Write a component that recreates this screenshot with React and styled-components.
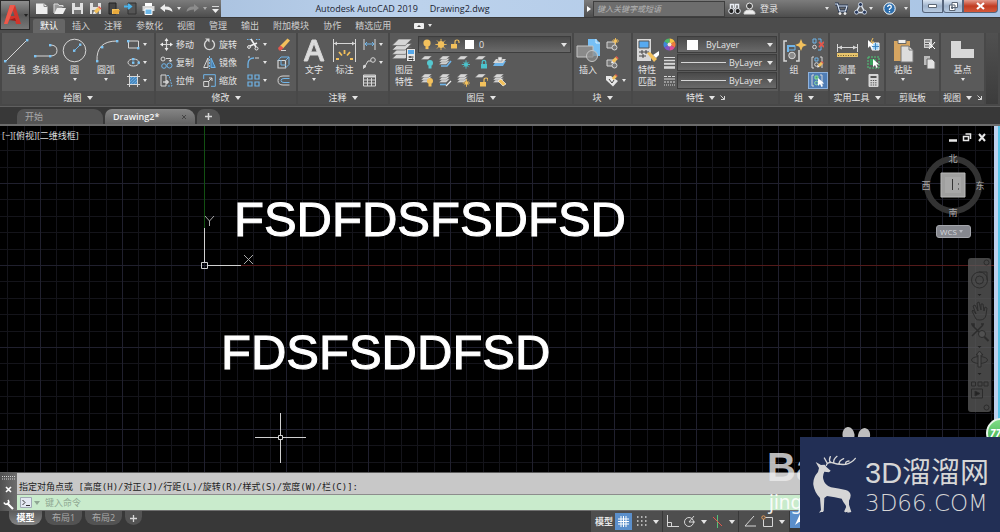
/**
 * =CAD workspace
 ************************************************************/

import React from "react";
import styled, { createGlobalStyle } from "styled-components";

/**
 * =Theme
 ******************************/

const COL = {
	light: "#d6d6d6",
	blue: "#6fb4e8",
	yellow: "#f3c15c",
	text: "#e4e4e4",
	panel: "#5a5a5a",
	panelDark: "#4c4c4c",
	dark: "#383838",
	navy: "#222f55"
};

const FONT = `"Open Sans", "Noto Sans CJK SC", sans-serif`;

/**
 * =Styles
 ******************************/

const GlobalStyle = createGlobalStyle`
	* {
		box-sizing: border-box;
	}

	body {
		margin: 0;
		background: ${COL.dark};
		color: ${COL.text};
		font-family: ${FONT};
		font-size: 9px;
		line-height: 12px;
	}

	button, input, select {
		border: none;
		background: none;
		color: inherit;
		font: inherit;
		margin: 0;
		padding: 0;
		min-width: 0;
	}

	svg {
		display: block;
		flex: none;
	}
`;

const Page = styled.div`
	position: relative;
	display: flex;
	flex-direction: column;
	min-height: 100vh;
	overflow: hidden;
`;

const Caret = styled.span`
	flex: none;
	width: 0;
	height: 0;
	border: solid transparent;
	border-width: ${p => (p.$big ? "4px 3px 0" : "3px 2px 0")};
	border-top-color: ${p => p.$color || COL.text};
`;

// Header

const Header = styled.header`
	display: grid;
	grid-template-columns: 30px 1fr;
	grid-template-rows: 18px 15px;
	background: ${COL.panelDark};
`;

const AppButton = styled.button`
	grid-row: 1 / 3;
	height: 30px;
	display: flex;
	align-items: center;
	gap: 2px;
	padding-left: 3px;
	border: 1px solid #2a2a2a;
	background: linear-gradient(#8e8e8e, #5a5a5a 50%, #777);
`;

const TitleBar = styled.div`
	display: flex;
	background: linear-gradient(90deg, #9cb6d6, #bcd2ec 40%, #a9c4e4);
	border-bottom: 1px solid #3a3a3a;
`;

const QuickAccess = styled.div`
	flex: none;
	display: flex;
	align-items: center;
	width: 191px;
	padding-left: 3px;
	background: linear-gradient(#7c7c7c, #4d4d4d);
`;

const QuickButton = styled.button`
	display: flex;
	justify-content: center;
	align-items: center;
	width: ${p => p.$w || 18}px;
	height: 17px;
`;

const Title = styled.h1`
	flex: 1;
	display: flex;
	justify-content: center;
	gap: 12px;
	margin: 0;
	color: #1c2430;
	font-size: 9px;
	font-weight: normal;
	line-height: 17px;
	white-space: nowrap;
`;

const InfoCenter = styled.div`
	flex: none;
	display: flex;
	align-items: center;
	width: 326px;
	background: linear-gradient(#7c7c7c, #4d4d4d);

	& .Info-search {
		width: 132px;
		height: 16px;
		padding-left: 3px;
		border: 1px solid #3f3f3f;
		background: #6d6d6d;
		font-size: 8px;
		font-style: italic;

		&::placeholder {
			color: #b4b4b4;
			opacity: 1;
		}
	}

	& .Info-login {
		display: flex;
		align-items: center;
		gap: 4px;
		width: 86px;
	}

	& .Info-login ${Caret} {
		margin-left: auto;
	}
`;

const WindowButtons = styled.div`
	flex: none;
	display: flex;
	width: 90px;
	padding: 0 2px 4px 12px;
`;

const WindowButton = styled.button`
	flex: ${p => (p.$close ? 35 : 20)};
	display: flex;
	align-items: center;
	justify-content: center;
	height: 13px;
	border: 1px solid #56657c;
	border-top: none;
	border-radius: ${p => (p.$close ? "0 0 4px 0" : "0 0 0 3px")};
	background: ${p =>
		p.$close
			? "linear-gradient(#e49a8b, #c13c22 50%, #d4593b)"
			: "linear-gradient(#dbe6f3, #9fb3cc 50%, #b9cce2)"};
`;

const TabRow = styled.nav`
	display: flex;
	align-items: center;
	padding-left: 3px;
`;

const Tab = styled.button`
	height: 14px;
	padding: 0 7px;
	line-height: 14px;
	white-space: nowrap;
	border-radius: 2px 2px 0 0;
	color: ${p => (p.$active ? "#fff" : "#cfcfcf")};
	background: ${p => (p.$active ? "#666" : "none")};
`;

const TabExtra = styled.button`
	display: flex;
	align-items: center;
	gap: 4px;
	margin-left: 16px;
`;

// Ribbon

const Ribbon = styled.div`
	display: flex;
	gap: 2px;
	padding: 0 2px 2px;
	background: #484848;
	border-bottom: 1px solid #606060;
`;

const Panel_Styled = styled.section`
	flex: none;
	display: flex;
	flex-direction: column;
	width: ${p => p.$w}px;
	background: ${COL.panel};

	& .Panel-body {
		display: flex;
		height: 58px;
	}

	& .Panel-title {
		display: flex;
		align-items: center;
		justify-content: center;
		gap: 5px;
		margin: 0;
		height: 13px;
		font-size: 9px;
		font-weight: normal;
		white-space: nowrap;
		background: ${COL.panelDark};
	}
`;

const RibbonRest = styled.div`
	flex: 1;
	background: linear-gradient(#505050, #3c3c3c);
`;

const Big_Styled = styled.button`
	flex: none;
	display: flex;
	flex-direction: column;
	align-items: center;
	width: ${p => p.$w}px;
	padding-top: 4px;
	line-height: 12px;
	white-space: nowrap;

	& .Big-icon {
		display: flex;
		align-items: center;
		height: 27px;
	}

	& ${Caret} {
		margin-top: 2px;
	}
`;

const Column = styled.div`
	flex: ${p => (p.$w ? "none" : 1)};
	display: flex;
	flex-direction: column;
	gap: 1px;
	width: ${p => (p.$w ? `${p.$w}px` : "auto")};
	min-width: 0;
	padding-top: 3px;
`;

const Row = styled.div`
	display: flex;
`;

const Small_Styled = styled.button`
	display: flex;
	align-items: center;
	height: 17px;
	white-space: nowrap;
	background: ${p => (p.$on ? "#4f7db5" : "none")};
	outline: ${p => (p.$on ? "1px solid #8fb2dc" : "none")};
	outline-offset: -1px;

	& .Small-icon {
		display: flex;
		justify-content: center;
		width: ${p => p.$cell}px;
	}
`;

const Field = styled.label`
	display: flex;
	align-items: center;
	gap: 3px;
	height: 17px;
	margin-right: 1px;
	padding: 0 3px;
	border: 1px solid #3d3d3d;
	background: linear-gradient(#4a4a4a, #696969);

	& select {
		flex: 1;
		appearance: none;
		outline: none;
	}
`;

// File tabs

const FileTabs = styled.nav`
	display: flex;
	align-items: flex-end;
	gap: 2px;
	height: 17px;
	padding-left: 17px;
	background: ${COL.dark};
`;

const FileTab = styled.button`
	display: flex;
	align-items: center;
	justify-content: space-between;
	width: ${p => p.$w}px;
	height: 15px;
	padding: 0 8px;
	border-radius: 7px 9px 0 0;
	color: ${p => (p.$active ? "#f4f4f4" : "#a9a9a9")};
	font-weight: ${p => (p.$active ? 600 : 400)};
	background: ${p =>
		p.$active ? "linear-gradient(#858585, #626262)" : "#545454"};
`;

// Drawing area

const Workspace = styled.main`
	position: relative;
	flex: 1;
	display: flex;
	min-height: 346px;
	border-top: 2px solid #6c6c6c;
	background: #000;
`;

const Drawing = styled.svg`
	position: absolute;
	inset: 0;
	width: 100%;
	height: 100%;
	font-family: "Liberation Sans", Arial, sans-serif;
	font-size: 49px;
`;

const ViewLabel = styled.div`
	position: relative;
	padding: 4px 2px;
	color: #dcdcdc;
	white-space: nowrap;
`;

const WindowEdge = styled.div`
	position: relative;
	width: 6px;
	margin-left: auto;
	border-right: 2px solid #57c4e8;
	background: #bdd2f0;
`;

const ViewTools = styled.aside`
	position: absolute;
	top: 6px;
	right: 14px;
	display: flex;
	flex-direction: column;
	align-items: flex-end;

	& .View-compass {
		margin-top: 8px;
	}

	& .View-wcs {
		width: 35px;
		height: 13px;
		margin: 6px 15px 0 0;
		display: flex;
		align-items: center;
		justify-content: space-between;
		padding: 0 7px 0 3px;
		border: 1px solid #a4a6ac;
		border-radius: 3px;
		background: #85878e;
		color: #d4d6dc;
		font-size: 8px;
	}
`;

const NavBar = styled.aside`
	position: absolute;
	top: 132px;
	right: 9px;
	display: flex;
	flex-direction: column;
	align-items: center;
	width: 23px;
	height: 154px;
	border-radius: 3px;
	background: rgba(92, 92, 92, 0.75);
`;

const Badge = styled.div`
	position: absolute;
	right: -16px;
	bottom: 24px;
	width: 30px;
	height: 30px;
	padding-left: 2px;
	border: 2px solid #e9f6ea;
	border-radius: 50%;
	background: linear-gradient(#7fdd86, #37a948);
	color: #fff;
	font-size: 10px;
	font-style: italic;
	font-weight: bold;
	line-height: 26px;
`;

// Command line & status

const Command = styled.section`
	display: grid;
	grid-template-columns: 17px 1fr;
	border-top: 1px solid #5c5c5c;

	& .Command-handle {
		display: flex;
		flex-direction: column;
		align-items: center;
		justify-content: space-between;
		padding: 3px 0 1px;
		background: linear-gradient(90deg, #505050, #6e6e6e);
	}

	& .Command-history {
		height: 22px;
		margin: 0;
		padding: 8px 2px 0;
		background: #c8c8c8;
		border-bottom: 1px solid #8d8d8d;
		color: #222;
		font-family: "DejaVu Sans Mono", "Noto Sans CJK SC", monospace;
		white-space: nowrap;
	}

	& .Command-prompt {
		display: flex;
		align-items: center;
		gap: 2px;
		height: 16px;
		padding-left: 3px;
		background: #c9ebcc;
		border-bottom: 1px solid #6f6f6f;
	}

	& input {
		flex: 1;
		padding-left: 3px;
		color: #333;
		outline: none;

		&::placeholder {
			color: #8fa893;
			opacity: 1;
		}
	}
`;

const Footer = styled.footer`
	display: flex;
	justify-content: space-between;
	height: 21px;
	background: ${COL.dark};
`;

const LayoutTabs = styled.nav`
	display: flex;
	gap: 3px;
	padding-left: 9px;
`;

const LayoutTab = styled.button`
	display: flex;
	align-items: center;
	justify-content: center;
	width: ${p => p.$w}px;
	height: 14px;
	border-radius: 0 0 9px 9px;
	color: ${p => (p.$active ? "#fff" : "#aaa")};
	font-weight: ${p => (p.$active ? 700 : 400)};
	background: ${p =>
		p.$active ? "linear-gradient(#5c5c5c, #858585)" : "#535353"};
`;

const Status = styled.div`
	display: flex;
	gap: 1px;
	padding-right: 190px;
`;

const StatusGroup = styled.div`
	display: flex;
	align-items: center;
	padding: 0 2px;
	background: #4e4e4e;
`;

const StatusButton = styled.button`
	display: flex;
	align-items: center;
	justify-content: center;
	width: ${p => p.$w}px;
	height: 17px;
	font-weight: ${p => (p.$bold ? 700 : 400)};
	background: ${p => (p.$on ? "#5b8fcb" : "none")};
`;

// Watermarks

const Watermark = styled.div`
	position: absolute;
	right: 0;
	bottom: 0;
	width: 200px;
	height: 95px;
	display: flex;
	align-items: center;
	gap: 7px;
	padding: 0 8px 0 12px;
	background: ${COL.navy};
	color: #d6d6d6;
	white-space: nowrap;

	& .Watermark-name {
		font-family: "Liberation Sans", "Noto Sans CJK SC", sans-serif;
		font-size: 29px;
		line-height: 36px;
	}

	& .Watermark-site {
		font-family: "DejaVu Sans", sans-serif;
		font-size: 23px;
		font-weight: 200;
		line-height: 24px;
	}
`;

const Paws = styled.div`
	position: absolute;
	right: 129px;
	bottom: 88px;
`;

const Backmark = styled.div`
	position: absolute;
	right: 200px;
	bottom: 18px;
	width: 33px;
	overflow: hidden;
	color: rgba(236, 236, 236, 0.8);
	font-family: "Liberation Sans", sans-serif;

	& .Backmark-name {
		padding-bottom: 3px;
		font-size: 40px;
		font-weight: bold;
		line-height: 40px;
	}

	& .Backmark-site {
		padding-left: 2px;
		color: rgba(255, 255, 255, 0.9);
		font-family: "Noto Sans", sans-serif;
		font-size: 19px;
		line-height: 24px;
	}
`;

/**
 * =Icons
 ******************************/

const Svg = ({ w = 13, h = 13, vb, children, ...rest }) => (
	<svg
		width={w}
		height={h}
		viewBox={vb || `0 0 ${w} ${h}`}
		fill="none"
		stroke={COL.light}
		aria-hidden="true"
		{...rest}
	>
		{children}
	</svg>
);

const Dots = ({ at }) =>
	at.map(([x, y]) => (
		<rect key={`${x}-${y}`} x={x - 1} y={y - 1} width="2.4" height="2.4" fill="#7cc4f4" stroke="none" />
	));

const Sheets = ({ x = 0, y = 0, s = 1, n = 3, fill = COL.light }) => (
	<g transform={`translate(${x} ${y}) scale(${s})`} fill={fill} stroke={COL.panel} strokeWidth=".6">
		{[...Array(n)].map((_, i) => (
			<path key={i} d={`M0 ${n * 4 + 2 - i * 4} l6 -6 h12 l-6 6z`} />
		))}
	</g>
);

const Bulb = ({ x, y, r = 3, c = COL.yellow }) => (
	<g stroke="none">
		<circle cx={x} cy={y} r={r} fill={c} />
		<path d={`M${x - 1.5} ${y + r - 0.5} h3 v3 h-3z`} fill={c} />
	</g>
);

const Sun = ({ x, y, r = 2.4, c = COL.yellow }) => (
	<g stroke={c}>
		<circle cx={x} cy={y} r={r} fill={c} />
		<path
			d={`M${x} ${y - r - 2.6}v${2 * r + 5.2} M${x - r - 2.6} ${y}h${2 * r + 5.2} M${x - r - 1} ${y - r - 1}l${2 * r + 2} ${2 * r + 2} M${x + r + 1} ${y - r - 1}l${-2 * r - 2} ${2 * r + 2}`}
			strokeWidth=".9"
		/>
	</g>
);

const Lock = ({ x, y, c = COL.yellow, open }) => (
	<g>
		<rect x={x} y={y} width="6" height="4.5" fill={c} stroke="none" />
		<path d={open ? `M${x + 4} ${y}v-2q0-2 2-2t2 2v1` : `M${x + 1.2} ${y}v-1.6q0-2 1.8-2t1.8 2v1.6`} stroke={c} strokeWidth="1.2" />
	</g>
);

const Pencil = ({ x, y, s = 1 }) => (
	<g transform={`translate(${x} ${y}) scale(${s})`} stroke="none">
		<path d="M0 8 L1 5 L3.5 7.5z" fill="#f2f2f2" />
		<path d="M1 5 L5 1 L7.5 3.5 L3.5 7.5z" fill={COL.yellow} />
		<path d="M5 1 L6 0 L8.5 2.5 L7.5 3.5z" fill="#e2574c" />
	</g>
);

const Cursor = ({ x, y }) => (
	<path d={`M${x} ${y}v8l2-2 1.5 3 1.3-.7-1.4-2.8h2.8z`} fill="#fff" stroke="none" />
);

const ICON = {
	line: <Svg w={25} h={25}><path d="M2 23L23 2" /><Dots at={[[1, 23], [23, 2]]} /></Svg>,
	polyline: <Svg w={25} h={25}><path d="M2 18H17Q24 18 24 12.500T17 7" /><Dots at={[[2, 18], [17, 18], [17, 7]]} /></Svg>,
	circle: <Svg w={25} h={25}><circle cx="12.500" cy="12.500" r="11.300" /><path d="M12.500 12.500L18 7" stroke={COL.blue} /><Dots at={[[12, 12.5], [18, 6.5]]} /></Svg>,
	arc: <Svg w={25} h={25}><path d="M3 23Q2 3 23 3" /><Dots at={[[3, 23], [8, 9], [23, 3]]} /></Svg>,
	rect: <Svg><path d="M1.500 3h10v7h-10z" /><Dots at={[[1, 3], [11, 10]]} /></Svg>,
	ellipse: <Svg><ellipse cx="6.500" cy="6.500" rx="5.500" ry="3.500" /><Dots at={[[6, 6.5], [11.5, 6.5], [6, 3]]} /></Svg>,
	hatch: (
		<Svg>
			<path d="M3 3h7v7h-7z" fill="#4a87bd" stroke="none" />
			<path d="M3 5l2-2 M3 8l5-5 M4 10l6-6 M7 10l3-3" stroke={COL.blue} strokeWidth=".7" />
			<path d="M2.500 0v13 M10.500 0v13 M0 2.500h13 M0 10.500h13" />
		</Svg>
	),
	move: (
		<Svg>
			<path d="M6.500 1v11 M1 6.500h11" strokeWidth="1.200" />
			<path d="M6.500 0l2 3h-4z M6.500 13l2-3h-4z M0 6.500l3-2v4z M13 6.500l-3-2v4z" fill="#eee" stroke="none" />
		</Svg>
	),
	rotate: <Svg><path d="M4 2.300A5 5 0 1 0 9 2.300" strokeWidth="1.400" /><path d="M2 .5h4.500v4z" fill={COL.light} stroke="none" /></Svg>,
	copy: (
		<Svg>
			<circle cx="3" cy="3" r="2" /><path d="M6 2.500h4.500v2.500 M9 4l1.500 2 1.500-2" />
			<circle cx="4" cy="10" r="2.300" stroke={COL.blue} /><circle cx="9.500" cy="9.500" r="2.500" stroke={COL.blue} />
		</Svg>
	),
	mirror: <Svg><path d="M5 2v9.500H.7z" /><path d="M8 2v9.500h4.300z" stroke={COL.blue} fill="#467ba8" /><path d="M6.500 0v13" stroke={COL.blue} strokeDasharray="2 1" /></Svg>,
	stretch: <Svg><path d="M1 1h5v11H1z" /><path d="M7 1.500h2l3 10.500H7" stroke={COL.blue} strokeDasharray="2 1" /><path d="M3 8h5 M6.500 6l2 2-2 2" stroke="#fff" /></Svg>,
	scale: <Svg><path d="M.7 7.500h5v5h-5z" /><path d="M.7 5V.7h11.600v11.600H8" stroke={COL.blue} /><path d="M5 8l4-4 M6 4h3v3" /></Svg>,
	trim: (
		<Svg>
			<path d="M0 1.500h4 M9 1.500h4" stroke={COL.blue} strokeDasharray="1.500 1" />
			<path d="M4 1l5 8 M10 5l-7 3" strokeWidth="1.600" stroke="#eee" />
			<circle cx="9.500" cy="10.500" r="1.500" stroke="#eee" /><circle cx="2" cy="9" r="1.400" stroke="#eee" />
		</Svg>
	),
	fillet: <Svg><path d="M1 12V8Q1 2 7 2" stroke={COL.blue} strokeWidth="1.300" /><path d="M8 2h4 M1 1h2" /></Svg>,
	array: <Svg><path d="M1 1h4v4H1z M8 1h4v4H8z M1 8h4v4H1z M8 8h4v4H8z" stroke={COL.blue} strokeWidth="1.200" /></Svg>,
	erase: (
		<Svg>
			<path d="M3 8L10.500 .5l2.500 2L6 10.500z" fill={COL.yellow} stroke="none" />
			<path d="M1 10l2.500-2.500L6.500 10 4 12.500H2z" fill="#e2574c" stroke="none" />
			<path d="M4 12.500h5" />
		</Svg>
	),
	explode: <Svg><path d="M1 4.500h7.500v7.500H1z" strokeWidth="1.200" /><path d="M1 4.500l3-3.500h8v7.500l-3.500 3.500 M8.500 4.500L12 1 M4 4v5h5" stroke={COL.blue} /></Svg>,
	offset: <Svg><path d="M12.500 2H6Q1 2 1 6.500T6 11h6.500" /><path d="M12.500 4.500H7Q4 4.500 4 6.500T7 8.500h5.500" stroke={COL.blue} /></Svg>,
	text: <Svg w={22} h={25}><path d="M1 23L9 2h4l8 21h-3.500l-2.200-6H6.700l-2.200 6z M7.800 14h6.400L11 5.200z" fill="#dcdcdc" fillRule="evenodd" /></Svg>,
	dimension: (
		<Svg w={25} h={25}>
			<path d="M1.500 1v23 M23.500 1v23 M2 5.500h21" /><path d="M2 5.500l3-2v4z M23 5.500l-3-2v4z" fill={COL.light} stroke="none" />
			<path d="M4 21h3 M18 21h3 M7 14l3 3.500 M18 14l-3 3.500 M12.500 12v4" stroke={COL.yellow} strokeWidth="1.800" />
		</Svg>
	),
	linear: <Svg><path d="M1 1v11 M12 1v11" /><path d="M2 6h9 M4 4L2 6l2 2 M9 4l2 2-2 2" stroke={COL.blue} /></Svg>,
	leader: <Svg><path d="M1 12L5 5h3" /><path d="M0 12.500l1-3.500 2 1.500z" fill={COL.light} /><circle cx="10" cy="4" r="2.300" /></Svg>,
	table: <Svg><path d="M.5 1h12v11H.5z M.5 6h12 M.5 9h12 M4.500 4v8 M8.500 4v8" /><path d="M.5 2.500h12" strokeWidth="2" /></Svg>,
	layers: (
		<Svg w={25} h={25}>
			<Sheets x={0} y={1} s={1.1} n={4} />
			<path d="M14.500 10.500h9v13h-9z" fill="#e6e6e6" stroke="#555" />
			<path d="M16 12h6v4h-6z" fill="#55a8ea" stroke="none" />
			<path d="M16.500 19h5 M16.500 21.500h5 M18 18v2 M20.500 20.500v2" stroke="#333" />
		</Svg>
	),
	layOff: <Svg><Sheets s={0.6} n={1} /><Bulb x={9} y={7} c="#55c8d0" /></Svg>,
	layIso: <Svg><Sheets s={0.6} /><path d="M2 10h6l4-5" stroke={COL.blue} strokeWidth="1.600" /></Svg>,
	layFreeze: <Svg><Sheets s={0.6} n={1} /><Sun x={9} y={8.5} r={1.6} c="#4cc3cc" /></Svg>,
	layLock: <Svg><Sheets s={0.6} n={1} /><Lock x={6} y={8} c="#4cc3cc" /></Svg>,
	layCurrent: (
		<Svg>
			<path d="M0 10l3-5h10l-3 5z" fill={COL.blue} stroke="none" /><path d="M0 7l3-4h10l-3 4z" fill={COL.light} stroke="none" />
			<path d="M5 1h4v4H5z" fill="#eee" stroke="#777" strokeWidth=".6" />
		</Svg>
	),
	layOn: <Svg><Sheets s={0.6} n={3} /><Bulb x={9} y={7} /></Svg>,
	layUniso: <Svg><Sheets s={0.6} /><path d="M1 10.500h6" stroke={COL.blue} strokeWidth="1.600" /><path d="M7 12l5-5" stroke="#eee" strokeWidth="1.300" /></Svg>,
	layThaw: <Svg><Sheets s={0.6} n={3} /><Sun x={9.5} y={9} r={1.2} /></Svg>,
	layUnlock: <Svg><Sheets s={0.6} n={1} /><Lock x={5} y={8} open /></Svg>,
	layMatch: <Svg><Sheets s={0.6} n={3} /><path d="M5 7l5 5 3-2-5-5z" fill={COL.yellow} stroke="#fff" strokeWidth=".6" /></Svg>,
	insert: (
		<Svg w={25} h={25}>
			<path d="M12 1h8l4 4v13H12z" fill="#77bff5" stroke="none" /><path d="M20 1v4h4" stroke="#d8eefc" />
			<path d="M1 8h16v11H1z" fill="#8a8a8a" stroke="#c4c4c4" /><circle cx="16" cy="18" r="5.500" fill="#8a8a8a" fillOpacity=".7" stroke="#c4c4c4" />
		</Svg>
	),
	blockNew: <Svg><path d="M1 4h8v6H1z" fill="#777" /><circle cx="8.500" cy="9.500" r="2.500" fill="#777" /><Sun x={9.5} y={3} r={1} /></Svg>,
	blockEdit: <Svg><path d="M1 4h8v6H1z" fill="#777" /><circle cx="8.500" cy="9.500" r="2.500" fill="#777" /><Pencil x={5} y={0} s={0.9} /></Svg>,
	attr: <Svg><path d="M0 2h5l7 5-5 5.500L0 6z" fill="#e6e6e6" stroke="none" /><path d="M3 5l3 4 2-3" stroke="#444" /><Pencil x={5} y={0} s={0.8} /></Svg>,
	match: (
		<Svg w={25} h={25}>
			<path d="M2 1h14v22H2z" fill="#d8d8d8" stroke="none" /><path d="M4 3h10v7H4z" fill="#57aaf0" stroke="#555" />
			<path d="M4 14h10 M4 18h7 M7 12v4 M11 12v4 M8 16v4" stroke="#444" />
			<path d="M12 15l3-1 7 7-3 3z" fill={COL.yellow} stroke="none" /><path d="M18 17l6-4v4l-3 3z" fill="#fff" stroke="none" />
		</Svg>
	),
	wheel: (
		<Svg stroke="none">
			{["#f6c443", "#ef7b3c", "#dc4c9a", "#8154c8", "#3f86d9", "#4bb86a"].map((c, i) => (
				<path key={c} d="M6.500 6.500V.5A6 6 0 0 1 11.700 3.500z" fill={c} transform={`rotate(${i * 60} 6.5 6.5)`} />
			))}
			<circle cx="6.500" cy="6.500" r="2" fill="#f4e6d8" />
		</Svg>
	),
	weights: <Svg><path d="M1 1.500h11" /><path d="M1 4.500h11" strokeWidth="1.500" /><path d="M1 7.800h11" strokeWidth="2" /><path d="M1 11.500h11" strokeWidth="2.600" /></Svg>,
	types: <Svg><path d="M1 2.500h11" strokeDasharray="3 1" /><path d="M1 5h11" /><path d="M1 8h11" strokeDasharray="2 1" /><path d="M1 11h11" strokeDasharray="1 1" /></Svg>,
	group: (
		<Svg w={25} h={25}>
			<path d="M5 3H2v20h3 M14 23h3V12" strokeWidth="1.500" /><path d="M6 14V8h7" stroke={COL.blue} strokeWidth="2" /><path d="M6 12h7V8" stroke={COL.blue} />
			<circle cx="10" cy="17.500" r="3.300" fill="#8a8a8a" /><path d="M19 1l1.700 4.300L25 7l-4.300 1.700L19 13l-1.700-4.300L13 7l4.300-1.700z" fill={COL.yellow} stroke="none" />
		</Svg>
	),
	ungroup: <Svg><path d="M2 1h3v4H2z M7 1h3v11H7" stroke={COL.blue} /><circle cx="3.500" cy="9" r="1.800" /><path d="M8 4l5 5 M13 4L8 9" stroke="#e2574c" strokeWidth="1.800" /></Svg>,
	groupEdit: <Svg><path d="M3 1H1v11h2 M9 1h2v11" /><path d="M4 2h3v3H4z" stroke={COL.blue} /><circle cx="5.500" cy="8.500" r="1.800" /><Pencil x={6} y={5} s={0.8} /></Svg>,
	groupSelect: <Svg><path d="M3 1H1v11h2 M9 1h2v11" /><path d="M4 2h3v3H4z" fill="#4aa96c" stroke="#8fdc9f" /><circle cx="5.500" cy="9" r="1.800" stroke="#8fdc9f" /><Cursor x={7} y={4} /></Svg>,
	measure: (
		<Svg w={23} h={25}>
			<path d="M1.500 6v8 M21.500 6v8 M2 9.500h19" /><path d="M2 9.500l4-2v4z M21 9.500l-4-2v4z" fill={COL.light} stroke="none" />
			<path d="M1 15h21v4H1z" fill="#e8c46c" stroke="none" /><path d="M2 17.500h20" stroke="#6c5a2c" strokeDasharray="1 1.500" />
		</Svg>
	),
	quick: <Svg><path d="M5 5h7v7H5z" fill="#9cd0f6" stroke="#fff" /><path d="M5 8.500h7 M8.500 5v7" stroke="#3f87c2" /><path d="M6 0l-2 4h3L4 7" stroke={COL.yellow} /><Cursor x={1} y={2} /></Svg>,
	selectAll: <Svg><path d="M1 1h11v11H1z" stroke="#4ecb78" strokeDasharray="2 1" /><path d="M3 3h6v6H3z" fill="#3a9e5c" stroke="none" /><Cursor x={6} y={3} /></Svg>,
	calc: (
		<Svg>
			<path d="M2 .5h9v12h-9z" fill={COL.light} />
			<path d="M3.500 3h6" stroke="#555" strokeWidth="2" />
			<path d="M3.500 6.500h6 M3.500 8.800h6 M3.500 11h6" stroke="#555" strokeDasharray="1.400 .9" />
		</Svg>
	),
	paste: (
		<Svg w={23} h={25}>
			<path d="M2 3h16v20H2z" fill="#d6a561" stroke="none" /><path d="M6 1.500h8v4H6z" fill="#eee" stroke="#666" />
			<path d="M9 8h8l4 4v12H9z" fill="#ddd" stroke="#777" /><path d="M17 8v4h4" stroke="#777" />
		</Svg>
	),
	cut: <Svg><path d="M1 1h8v9H1z" fill="#d0d0d0" stroke="none" /><path d="M2 3h5 M2 5.500h5 M2 8h4" stroke="#555" /><path d="M6 5l6 6 M12 4l-6 7" stroke="#fff" /></Svg>,
	copyClip: <Svg><path d="M1 0h6v9H1z" fill="#bbb" stroke="none" /><path d="M4 3h5l3 3v7H4z" fill="#e2e2e2" stroke="#666" /></Svg>,
	base: <Svg w={25} h={25}><path d="M1 3h10v8h13v9H1z" fill="#d8d8d8" stroke="none" /></Svg>,
	search: (
		<Svg>
			<path d="M2.500 6V2.500h3V6 M7.500 6V2.500h3V6 M5.500 6.500h2" stroke="#e8ecf2" strokeWidth="1.500" />
			<circle cx="3.300" cy="9" r="2.600" fill="#222" stroke="#e8ecf2" /><circle cx="9.700" cy="9" r="2.600" fill="#222" stroke="#e8ecf2" />
		</Svg>
	),
	user: <Svg><circle cx="6.500" cy="4" r="3" fill="#444" stroke="#eee" /><path d="M1 12q0-4 5.500-4t5.500 4z" fill="#eee" /></Svg>,
	cart: <Svg><path d="M0 2h2.500l2 7h6L12 4H3.500" stroke="#25344e" strokeWidth="2.800" /><path d="M0 2h2.500l2 7h6L12 4H3.500" stroke="#dbe6f6" strokeWidth="1.200" /><circle cx="5" cy="11.500" r="1.100" fill="#fff" /><circle cx="10" cy="11.500" r="1.100" fill="#fff" /></Svg>,
	a360: <Svg><path d="M6.500 2L2 10.500h9z" stroke="#dfe8f4" strokeWidth="1.500" /><g fill="#26375a" stroke="#dfe8f4" strokeWidth=".8"><circle cx="6.500" cy="2.500" r="2" /><circle cx="2.500" cy="10.200" r="2" /><circle cx="10.500" cy="10.200" r="2" /></g></Svg>,
	help: <Svg><circle cx="6.500" cy="6.500" r="5.700" fill="#2d6fae" stroke="#fff" /><path d="M4.700 5Q4.700 3.200 6.500 3.200T8.300 5Q8.300 6 6.500 7v1 M6.500 9v1.300" stroke="#fff" strokeWidth="1.300" /></Svg>
};

const QUICK = {
	新建: <Svg><path d="M1 1.500h8l3.500 3v7.500H1z" fill="#eee" stroke="none" /><path d="M9 1.500v3h3.500" stroke="#888" /></Svg>,
	打开: <Svg><path d="M1 11V2h4l1 1.500h4V5" fill="#999" stroke="#ddd" /><path d="M1 12l3-6h9l-3 6z" fill="#eee" stroke="none" /></Svg>,
	保存: <Svg><path d="M1 1h11v11H1z" fill="#e0e0e0" stroke="none" /><path d="M4 1h5v4H4z M3 8h7v4H3z" fill="#777" stroke="none" /></Svg>,
	另存为: <Svg><path d="M1 1h11v11H1z" fill="#e0e0e0" stroke="none" /><path d="M4 1h5v4H4z M3 8h7v4H3z" fill="#777" stroke="none" /><Pencil x={4} y={4} /></Svg>,
	从移动设备打开: <Svg><path d="M2 1h7v11H2z" fill="#444" stroke="#222" /><path d="M5 7h7v5H5z" fill={COL.yellow} stroke="none" /><path d="M6 9l2-1h5l-2 4H6z" fill="#e8a93c" stroke="none" /></Svg>,
	保存到移动设备: <Svg><path d="M4 1h8v11H4z" fill="#555" stroke="#333" /><path d="M0 4.500h6 M4 2l3 2.500L4 7" stroke="#4ab5ee" strokeWidth="2" /></Svg>,
	打印: <Svg><path d="M3 1h7v3H3z" fill="#fff" stroke="none" /><path d="M.5 4h12v5H.5z" fill="#d5d5d5" stroke="none" /><path d="M3 7h7v5.500H3z" fill="#6db8e8" stroke="#fff" /></Svg>
};

/**
 * =Components
 ******************************/

const Big = ({ w, icon, label, label2, caret }) => (
	<Big_Styled $w={w}>
		<span className="Big-icon">{ICON[icon]}</span>
		<span>{label}</span>
		{label2 && <span>{label2}</span>}
		{caret && <Caret />}
	</Big_Styled>
);

const Small = ({ icon, label, title, caret, on, cell = 20 }) => (
	<Small_Styled $on={on} $cell={cell} title={title} aria-label={label || title}>
		<span className="Small-icon">{ICON[icon]}</span>
		{label}
		{caret && <Caret />}
	</Small_Styled>
);

const Panel = ({ w, title, caret = true, launcher, children }) => (
	<Panel_Styled $w={w}>
		<div className="Panel-body">{children}</div>
		<h2 className="Panel-title">
			{title}
			{caret && <Caret $big />}
			{launcher && <Svg w={5} h={5}><path d="M.5 .5l4 4 M4.500 1v3.500H1" /></Svg>}
		</h2>
	</Panel_Styled>
);

const TABS = ["默认", "插入", "注释", "参数化", "视图", "管理", "输出", "附加模块", "协作", "精选应用"];

const LAYER_TOOLS = [
	["layOff", "layIso", "layFreeze", "layLock", "layCurrent"],
	["layOn", "layUniso", "layThaw", "layUnlock", "layMatch"]
];

const GRID_STEPS = [16, 33, 49, 66];

function TopBar() {
	return (
		<Header>
			<AppButton aria-label="应用程序">
				<Svg w={18} h={22}>
					<path d="M0 20L6 1h5l6 19h-5l-1-4H5l-1.500 4z M6.500 12h4L8.500 5z" fill="#d0352c" fillRule="evenodd" stroke="none" />
					<path d="M6 1h5L3.500 20H0z" fill="#ec5a4c" stroke="none" />
					<path d="M5 16l6-2 1 3z" fill="#9e1c18" stroke="none" />
				</Svg>
				<Caret $color="#222" />
			</AppButton>
			<TitleBar>
				<QuickAccess>
					{Object.keys(QUICK).map(name => (
						<QuickButton key={name} aria-label={name}>{QUICK[name]}</QuickButton>
					))}
					<QuickButton aria-label="放弃">
						<Svg><path d="M0 6l5-4v2.500Q12 4 12.500 10 10 7.500 5 7.500V10z" fill="#eee" stroke="none" /></Svg>
					</QuickButton>
					<QuickButton $w={8} aria-label="放弃列表"><Caret /></QuickButton>
					<QuickButton aria-label="重做">
						<Svg><path d="M13 6L8 2v2.500Q1 4 .5 10 3 7.500 8 7.500V10z" fill="#8c8c8c" stroke="none" /></Svg>
					</QuickButton>
					<QuickButton $w={8} aria-label="重做列表"><Caret $color="#aaa" /></QuickButton>
					<QuickButton $w={12} aria-label="自定义">
						<Svg w={7} h={8}><path d="M0 1.500h7" /><path d="M0 4h7l-3.500 4z" fill="#eee" stroke="none" /></Svg>
					</QuickButton>
				</QuickAccess>
				<Title><span>Autodesk AutoCAD 2019</span><span>Drawing2.dwg</span></Title>
				<InfoCenter>
					<QuickButton $w={9} aria-label="展开"><Svg w={4} h={6}><path d="M0 0l4 3-4 3z" fill="#fff" stroke="none" /></Svg></QuickButton>
					<input className="Info-search" aria-label="搜索" placeholder="键入关键字或短语" />
					<QuickButton aria-label="搜索">{ICON.search}</QuickButton>
					<button className="Info-login">{ICON.user}登录<Caret /></button>
					<QuickButton $w={24} aria-label="购物车">{ICON.cart}</QuickButton>
					<QuickButton $w={14} aria-label="A360">{ICON.a360}</QuickButton>
					<QuickButton $w={8} aria-label="A360 列表"><Caret /></QuickButton>
					<QuickButton $w={28} aria-label="帮助">{ICON.help}</QuickButton>
					<QuickButton $w={5} aria-label="帮助列表"><Caret /></QuickButton>
				</InfoCenter>
				<WindowButtons>
					<WindowButton aria-label="最小化"><Svg w={9} h={4}><path d="M.5 .5h8v3h-8z" fill="#fff" stroke="#5b6675" /></Svg></WindowButton>
					<WindowButton aria-label="还原"><Svg w={9} h={9}><path d="M3 .5h5.500v5h-5.500z M.5 3h5.500v5.500H.5z" fill="#fff" stroke="#5b6675" /><path d="M2.500 5h1.500v1.500H2.500z" stroke="#5b6675" /></Svg></WindowButton>
					<WindowButton $close aria-label="关闭"><Svg w={9} h={8}><path d="M1 1l7 6 M8 1L1 7" stroke="#fff" strokeWidth="2.200" /></Svg></WindowButton>
				</WindowButtons>
			</TitleBar>
			<TabRow>
				{TABS.map((tab, i) => <Tab key={tab} $active={i === 0}>{tab}</Tab>)}
				<TabExtra aria-label="最小化功能区">
					<Svg w={10} h={6}><rect width="10" height="6" rx="1" fill="#eee" stroke="none" /><path d="M3 4l2-2 2 2z" fill="#444" stroke="none" /></Svg>
					<Caret />
				</TabExtra>
			</TabRow>
		</Header>
	);
}

function RibbonBar() {
	return (
		<Ribbon>
			<Panel w={152} title="绘图">
				<Big w={29} icon="line" label="直线" />
				<Big w={29} icon="polyline" label="多段线" />
				<Big w={29} icon="circle" label="圆" caret />
				<Big w={34} icon="arc" label="圆弧" caret />
				<Column>
					<Small icon="rect" title="矩形" caret />
					<Small icon="ellipse" title="椭圆" caret />
					<Small icon="hatch" title="图案填充" caret />
				</Column>
			</Panel>
			<Panel w={140} title="修改">
				<Column $w={43}>
					<Small icon="move" label="移动" />
					<Small icon="copy" label="复制" />
					<Small icon="stretch" label="拉伸" />
				</Column>
				<Column $w={44}>
					<Small icon="rotate" label="旋转" />
					<Small icon="mirror" label="镜像" />
					<Small icon="scale" label="缩放" />
				</Column>
				<Column $w={30}>
					<Small icon="trim" title="修剪" caret />
					<Small icon="fillet" title="圆角" caret />
					<Small icon="array" title="阵列" caret />
				</Column>
				<Column>
					<Small icon="erase" title="删除" />
					<Small icon="explode" title="分解" />
					<Small icon="offset" title="偏移" />
				</Column>
			</Panel>
			<Panel w={90} title="注释">
				<Big w={32} icon="text" label="文字" caret />
				<Big w={29} icon="dimension" label="标注" />
				<Column>
					<Small icon="linear" title="线性" caret />
					<Small icon="leader" title="引线" caret />
					<Small icon="table" title="表格" />
				</Column>
			</Panel>
			<Panel w={182} title="图层">
				<Big w={28} icon="layers" label="图层" label2="特性" />
				<Column>
					<Field>
						<Svg w={54} h={13}>
							<Bulb x={5} y={5} r={3.6} />
							<Sun x={19} y={6.5} r={3} />
							<Lock x={29} y={6} open />
							<path d="M43 2h9v9h-9z" fill="#fff" stroke="none" />
						</Svg>
						<select aria-label="图层"><option>0</option></select>
						<Caret $big />
					</Field>
					{LAYER_TOOLS.map(row => (
						<Row key={row[0]}>
							{row.map(icon => <Small key={icon} icon={icon} title={icon} cell={18} />)}
						</Row>
					))}
				</Column>
			</Panel>
			<Panel w={57} title="块">
				<Big w={28} icon="insert" label="插入" />
				<Column>
					<Small icon="blockNew" title="创建" />
					<Small icon="blockEdit" title="编辑" />
					<Small icon="attr" title="编辑属性" caret />
				</Column>
			</Panel>
			<Panel w={145} title="特性" launcher>
				<Big w={28} icon="match" label="特性" label2="匹配" />
				<Column $w={16}>
					<Small icon="wheel" title="对象颜色" cell={16} />
					<Small icon="weights" title="线宽" cell={16} />
					<Small icon="types" title="线型" cell={16} />
				</Column>
				<Column>
					<Field>
						<Svg w={22} h={12}><path d="M6 1h11v10H6z" fill="#fff" stroke="none" /></Svg>
						<select aria-label="颜色"><option>ByLayer</option></select>
						<Caret $big />
					</Field>
					<Field>
						<Svg w={45} h={3}><path d="M0 1.500h45" /></Svg>
						<select aria-label="线宽"><option>ByLayer</option></select>
						<Caret $big />
					</Field>
					<Field>
						<Svg w={45} h={3}><path d="M0 1.500h45" /></Svg>
						<select aria-label="线型"><option>ByLayer</option></select>
						<Caret $big />
					</Field>
				</Column>
			</Panel>
			<Panel w={48} title="组">
				<Big w={28} icon="group" label="组" />
				<Column>
					<Small icon="ungroup" title="解除编组" cell={19} />
					<Small icon="groupEdit" title="组编辑" cell={19} />
					<Small icon="groupSelect" title="启用组选择" cell={19} on />
				</Column>
			</Panel>
			<Panel w={54} title="实用工具">
				<Big w={34} icon="measure" label="测量" caret />
				<Column>
					<Small icon="quick" title="快速选择" cell={18} />
					<Small icon="selectAll" title="全部选择" cell={18} />
					<Small icon="calc" title="快速计算器" cell={18} />
				</Column>
			</Panel>
			<Panel w={53} title="剪贴板" caret={false}>
				<Big w={34} icon="paste" label="粘贴" caret />
				<Column>
					<Small icon="cut" title="剪切" cell={18} />
					<Small icon="copyClip" title="复制剪裁" cell={18} />
				</Column>
			</Panel>
			<Panel w={43} title="视图" launcher>
				<Big w={43} icon="base" label="基点" caret />
			</Panel>
			<RibbonRest />
		</Ribbon>
	);
}

function Viewport() {
	return (
		<Workspace>
			<Drawing>
				<defs>
					<pattern id="grid" x="40" y="57" width="82" height="82" patternUnits="userSpaceOnUse">
						{GRID_STEPS.map(n => (
							<path key={n} d={`M${n}.5 0v82 M0 ${n}.5h82`} stroke="#14141a" />
						))}
						<path d="M.5 0v82 M0 .5h82" stroke="#20202e" />
					</pattern>
				</defs>
				<rect width="100%" height="100%" fill="url(#grid)" />
				<path d="M204.500 0v102" stroke="#125012" />
				<line x1="241" y1="139.500" x2="100%" y2="139.500" stroke="#541a1a" />
				<g stroke="#d0d0d0" fill="none">
					<path d="M204.500 102v34 M208 139.500h33 M201.500 136.500h6v6h-6z" />
					<path d="M205 90l4.500 5 4.500-5 M209.500 95v5 M244 129l9 9 M253 129l-9 9" stroke="#a8a8a8" />
					<path d="M255 311.500h24 M283 311.500h23 M280.500 287v22 M280.500 314v23 M278.500 309.500h4v4h-4z" />
				</g>
				<g fill="#fff" stroke="#fff">
					<text x="234" y="110">FSDFDSFSDFSD</text>
					<text x="221" y="243">FDSFSDDFSD</text>
				</g>
			</Drawing>
			<ViewLabel>[−][俯视][二维线框]</ViewLabel>
			<ViewTools>
				<Svg w={38} h={11} stroke="#e8e8e8">
					<path d="M1 8.500h8" strokeWidth="2.500" />
					<path d="M17.500 2h5v5 M15.500 4.500h5v4h-5z" strokeWidth="1.500" />
					<path d="M31 2l6 7 M37 2l-6 7" strokeWidth="2" />
				</Svg>
				<Svg className="View-compass" w={66} h={68}>
					<circle cx="33" cy="34" r="26" stroke="#333" strokeWidth="6" />
					<path d="M21 22h24v24H21z" fill="#9f9f9f" stroke="#b8b8b8" />
					<path d="M25 26h16v16H25z" fill="#a8a8a8" stroke="none" />
					<path d="M32.500 28v11" stroke="#333" /><path d="M38.500 32v2 M38.500 37v2" stroke="#666" />
					<g fill="#a8a8a8" stroke="none" fontSize="9" textAnchor="middle">
						<text x="33" y="11">北</text>
						<text x="33" y="65">南</text>
						<text x="6" y="38">西</text>
						<text x="60" y="38">东</text>
					</g>
				</Svg>
				<button className="View-wcs">WCS<Caret $color="#b6b8c0" /></button>
			</ViewTools>
			<NavBar aria-label="导航栏">
				<Svg w={23} h={154} stroke="#2c2c2c">
					<circle cx="18.500" cy="4.500" r="2.500" /><circle cx="18.500" cy="149.500" r="2.500" />
					<circle cx="11.500" cy="22" r="8" /><circle cx="11.500" cy="22" r="4" /><path d="M11 14h8v8" />
					<path d="M4 53l4 8q1 1 4 1 5 0 6-5l1-7-2-1-1 4-1-7-2 0v6l-2-8-2 1 1 8-3-6-2 1 3 8-3-4z" />
					<path d="M4 67l12 12 M15 67L4 78 M3 66h3v3 M16 66h-3" strokeWidth="1.500" />
					<circle cx="14" cy="76" r="3.500" fill="#505050" /><path d="M16.500 79l4 4" strokeWidth="2" />
					<ellipse cx="11.500" cy="102" rx="8" ry="3.500" /><path d="M10 109V97H8l3.500-4 3.500 4h-2v12z" fill="#505050" />
					<path d="M3.500 124h4v4h-4z M10 124h4v4h-4z M16 124h4v4h-4z M3.500 131h11v9h-11z" /><path d="M7 133l5 2.500-5 2.500z" fill="#222" />
					<path d="M9.500 36h4l-2 2z M9.500 88h4l-2 2z M9.500 115h4l-2 2z" fill="#222" stroke="none" />
				</Svg>
			</NavBar>
			<WindowEdge />
			<Badge>77</Badge>
		</Workspace>
	);
}

function CommandLine() {
	return (
		<Command>
			<div className="Command-handle">
				<Svg w={13} h={4}><path d="M0 .5h13 M0 3h13" strokeDasharray="1 1" /></Svg>
				<Svg w={7} h={7}><path d="M1 1l5 5 M6 1L1 6" stroke="#fff" strokeWidth="1.600" /></Svg>
				<Svg w={11} h={11}><path d="M4 4l6 6" stroke="#fff" strokeWidth="2.200" /><path d="M1 3.500Q2 6 4.500 5T5 1" stroke="#fff" strokeWidth="1.600" /></Svg>
			</div>
			<div>
				<p className="Command-history">
					指定对角点或 [高度(H)/对正(J)/行距(L)/旋转(R)/样式(S)/宽度(W)/栏(C)]:
				</p>
				<div className="Command-prompt">
					<Svg w={12} h={11}><path d="M.5 .5h11v10H.5z" fill="#e4e8f2" stroke="#a0a8b4" /><path d="M2.500 3l2.500 2.500-2.500 2.500 M6 8.500h4" stroke="#333" /></Svg>
					<Caret $big $color="#8fa893" />
					<input aria-label="命令" placeholder="键入命令" />
				</div>
			</div>
		</Command>
	);
}

function StatusBar() {
	return (
		<Footer>
			<LayoutTabs>
				<LayoutTab $w={33} $active>模型</LayoutTab>
				<LayoutTab $w={37}>布局1</LayoutTab>
				<LayoutTab $w={37}>布局2</LayoutTab>
				<LayoutTab $w={17} aria-label="新建布局"><Svg w={7} h={7}><path d="M3.500 0v7 M0 3.500h7" strokeWidth="1.300" /></Svg></LayoutTab>
			</LayoutTabs>
			<Status>
				<StatusGroup>
					<StatusButton $w={22} $bold>模型</StatusButton>
					<StatusButton $w={17} $on aria-label="栅格"><Svg><path d="M4 1v11 M6.500 1v11 M9 1v11 M1 4h11 M1 6.500h11 M1 9h11" stroke="#fff" /></Svg></StatusButton>
					<StatusButton $w={19} aria-label="捕捉"><Svg><path d="M2 2h10 M2 6h10 M2 10h10" strokeDasharray="1.500 2.500" strokeWidth="1.500" /></Svg></StatusButton>
					<StatusButton $w={9} aria-label="捕捉列表"><Caret $big /></StatusButton>
				</StatusGroup>
				<StatusGroup>
					<StatusButton $w={14} aria-label="正交"><Svg><path d="M1.500 0v11.500H13 M1.500 7.500h4v4" /></Svg></StatusButton>
					<StatusButton $w={20} aria-label="极轴"><Svg><circle cx="6" cy="7" r="4.500" /><path d="M6 7h6 M6 7l5-6" /></Svg></StatusButton>
					<StatusButton $w={9} aria-label="极轴列表"><Caret $big /></StatusButton>
					<StatusButton $w={19} aria-label="等轴测"><Svg><path d="M6.500 0v13" stroke="#57c078" /><path d="M2 2l9 9" stroke="#e2574c" /></Svg></StatusButton>
					<StatusButton $w={9} aria-label="等轴测列表"><Caret $big /></StatusButton>
				</StatusGroup>
				<StatusGroup>
					<StatusButton $w={17} aria-label="追踪"><Svg><path d="M11 1L2 11h11" /></Svg></StatusButton>
					<StatusButton $w={18} aria-label="对象捕捉"><Svg><path d="M2.500 2.500h9v9h-9z" /><circle cx="2.500" cy="2.500" r="1.700" fill="#4e4e4e" stroke="#e39a5a" /></Svg></StatusButton>
					<StatusButton $w={11} aria-label="对象捕捉列表"><Caret $big /></StatusButton>
				</StatusGroup>
				<StatusButton $w={20} $on aria-label="注释可见性"><Svg><path d="M1 12L6 1l6 11-4-3H5z" fill="#fff" stroke="none" /></Svg></StatusButton>
			</Status>
		</Footer>
	);
}

function Marks() {
	return (
		<>
			<Paws>
				<Svg w={29} h={18} stroke="none" fill="#bdbdbd">
					<ellipse cx="6.500" cy="9" rx="6" ry="8" transform="rotate(-6 6.5 9)" />
					<ellipse cx="22" cy="10" rx="6" ry="8" transform="rotate(12 22 10)" />
				</Svg>
			</Paws>
			<Backmark>
				<div className="Backmark-name">Ba</div>
				<div className="Backmark-site">jing</div>
			</Backmark>
			<Watermark>
				<Svg w={46} h={61} vb="695 132 138 183" stroke="#d6d6d6">
					<path
						d="M706 156L722 165 733 164 739 172 751 182 746 187 732 185Q726 197 729 208 733 226 752 232 775 236 796 240 810 244 811 256 811 264 806 272L806 284 813 306 802 308 796 286Q788 276 784 266 765 262 740 258L732 264 730 304 716 308 722 300 719 264Q702 246 699 224 697 204 713 186L716 174Z"
						fill="#d6d6d6"
						stroke="none"
					/>
					<path d="M792 266l10 22-8 18 M803 284l-4 22 M727 262l-2 44" strokeWidth="6" />
					<path d="M738 166Q740 158 752 157 775 165 797 163 815 158 825 145 M741 160L732 144 M750 157Q745 150 750 140 M761 159Q757 150 770 139 M776 162Q776 152 790 146 M796 163Q794 154 806 153" strokeWidth="4" strokeLinecap="round" />
				</Svg>
				<div>
					<div className="Watermark-name">3D溜溜网</div>
					<div className="Watermark-site">3D66.COM</div>
				</div>
			</Watermark>
		</>
	);
}

/**
 * =App
 ************************************************************/

export default function App() {
	return (
		<Page>
			<GlobalStyle />
			<TopBar />
			<RibbonBar />
			<FileTabs>
				<FileTab $w={86}>开始</FileTab>
				<FileTab $w={90} $active>
					Drawing2*
					<Svg w={6} h={6}><path d="M1 1l4 4 M5 1L1 5" stroke="#444" /></Svg>
				</FileTab>
				<FileTab $w={23} aria-label="新建图形">
					<Svg w={7} h={7}><path d="M3.500 0v7 M0 3.500h7" strokeWidth="1.500" /></Svg>
				</FileTab>
			</FileTabs>
			<Viewport />
			<CommandLine />
			<StatusBar />
			<Marks />
		</Page>
	);
}
